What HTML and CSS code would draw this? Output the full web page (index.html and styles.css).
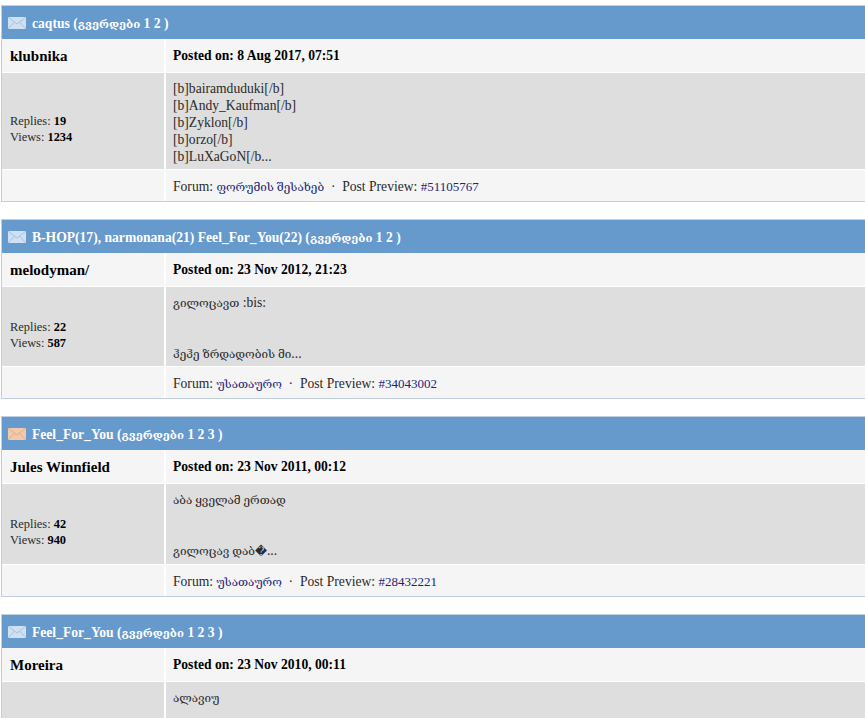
FILE: index.html
```html
<!DOCTYPE html>
<html lang="en">
<head>
<meta charset="utf-8">
<title>Search results</title>
<link rel="stylesheet" href="styles.css">
</head>
<body>
<main class="list">
  <section class="card">
    <header class="head">
      <svg class="env" viewBox="0 0 18 12"><rect width="18" height="12" fill="#cfe0f2"/><path d="M0 0l9 7 9-7M0 12l6.5-7M18 12l-6.5-7" fill="none" stroke="#9dbbdc" stroke-width=".8"/></svg>
      <span class="title"><a>caqtus</a> (<span class="ka">გვერდები</span> 1 2 )</span>
    </header>
    <div class="row"><div class="cell name">klubnika</div><div class="cell posted">Posted on: 8 Aug 2017, 07:51</div></div>
    <div class="row body">
      <div class="cell stats"><div>Replies: <b>19</b></div><div>Views: <b>1234</b></div></div>
      <div class="cell text">[b]bairamduduki[/b]<br>[b]Andy_Kaufman[/b]<br>[b]Zyklon[/b]<br>[b]orzo[/b]<br>[b]LuXaGoN[/b...</div>
    </div>
    <div class="row"><div class="cell"></div><div class="cell foot">Forum: <a class="ka">ფორუმის შესახებ</a> &nbsp;·&nbsp; Post Preview: <a class="num">#51105767</a></div></div>
  </section>
  <section class="card">
    <header class="head">
      <svg class="env" viewBox="0 0 18 12"><rect width="18" height="12" fill="#cfe0f2"/><path d="M0 0l9 7 9-7M0 12l6.5-7M18 12l-6.5-7" fill="none" stroke="#9dbbdc" stroke-width=".8"/></svg>
      <span class="title"><a>B-HOP(17), narmonana(21) Feel_For_You(22)</a> (<span class="ka">გვერდები</span> 1 2 )</span>
    </header>
    <div class="row"><div class="cell name">melodyman/</div><div class="cell posted">Posted on: 23 Nov 2012, 21:23</div></div>
    <div class="row body">
      <div class="cell stats"><div>Replies: <b>22</b></div><div>Views: <b>587</b></div></div>
      <div class="cell text"><span class="ka">გილოცავთ</span> :bis:<br><br><br><span class="ka">ჰეჰე ზრდადობის მი</span>...</div>
    </div>
    <div class="row"><div class="cell"></div><div class="cell foot">Forum: <a class="ka">უსათაურო</a> &nbsp;·&nbsp; Post Preview: <a class="num">#34043002</a></div></div>
  </section>
  <section class="card">
    <header class="head">
      <svg class="env" viewBox="0 0 18 12"><rect width="18" height="12" fill="#f3c9ad"/><path d="M0 0l9 7 9-7M0 12l6.5-7M18 12l-6.5-7" fill="none" stroke="#e0a482" stroke-width=".8"/></svg>
      <span class="title"><a>Feel_For_You</a> (<span class="ka">გვერდები</span> 1 2 3 )</span>
    </header>
    <div class="row"><div class="cell name">Jules Winnfield</div><div class="cell posted">Posted on: 23 Nov 2011, 00:12</div></div>
    <div class="row body">
      <div class="cell stats"><div>Replies: <b>42</b></div><div>Views: <b>940</b></div></div>
      <div class="cell text tall"><span class="ka">აბა ყველამ ერთად</span><br><br><br><span class="ka">გილოცავ დაბ�</span>...</div>
    </div>
    <div class="row"><div class="cell"></div><div class="cell foot">Forum: <a class="ka">უსათაურო</a> &nbsp;·&nbsp; Post Preview: <a class="num">#28432221</a></div></div>
  </section>
  <section class="card">
    <header class="head">
      <svg class="env" viewBox="0 0 18 12"><rect width="18" height="12" fill="#cfe0f2"/><path d="M0 0l9 7 9-7M0 12l6.5-7M18 12l-6.5-7" fill="none" stroke="#9dbbdc" stroke-width=".8"/></svg>
      <span class="title"><a>Feel_For_You</a> (<span class="ka">გვერდები</span> 1 2 3 )</span>
    </header>
    <div class="row"><div class="cell name">Moreira</div><div class="cell posted">Posted on: 23 Nov 2010, 00:11</div></div>
    <div class="row body">
      <div class="cell stats"></div>
      <div class="cell text"><span class="ka">ალავიუ</span></div>
    </div>
  </section>
</main>
</body>
</html>
```
FILE: styles.css
```css
html, body { margin: 0; background: #fff; }
body {
  height: 718px;
  overflow: hidden;
  font: 13.6px/17px "Liberation Serif", "DejaVu Serif", serif;
  color: #2a2a2a;
}
.ka { font-size: 11.7px; line-height: 1; }
.list { display: flex; flex-direction: column; gap: 17px; padding-top: 5px; }
.card { border: 1px solid #c2cfdf; border-right: 0; margin-left: 1px; background: #fff; }
.head {
  height: 33px;
  background: #6699cc;
  color: #fff;
  font-weight: bold;
  display: flex;
  align-items: center;
  gap: 6px;
  padding-left: 6px;
}
.title { padding-top: 2px; }
.title .ka { font-size: 11.4px; }
.env { width: 18px; height: 12px; flex: none; }
.row { display: grid; grid-template-columns: 162px 1fr; column-gap: 2px; margin-top: 1px; background: #fff; }
.head + .row { margin-top: 0; }
.cell { background: #f5f5f5; padding: 0 8px; min-height: 31px; display: flex; align-items: center; }
.name { font-size: 15px; font-weight: bold; color: #000; min-height: 33px; padding-top: 2px; box-sizing: border-box; }
.posted { font-weight: bold; color: #000; padding-left: 7px; }
.foot { display: block; height: 31px; line-height: 33px; padding-left: 7px; }
.foot a { color: #1c2679; }
.foot .num { font-size: 13px; line-height: 1; }
.body .cell { background: #dedede; }
.stats { flex-direction: column; align-items: flex-start; justify-content: center; padding-top: 16px; font-size: 12.4px; line-height: 16px; }
.stats b { color: #000; }
.text { display: block; padding: 7px 7px 4px; }
.tall { padding-bottom: 5px; }
```
